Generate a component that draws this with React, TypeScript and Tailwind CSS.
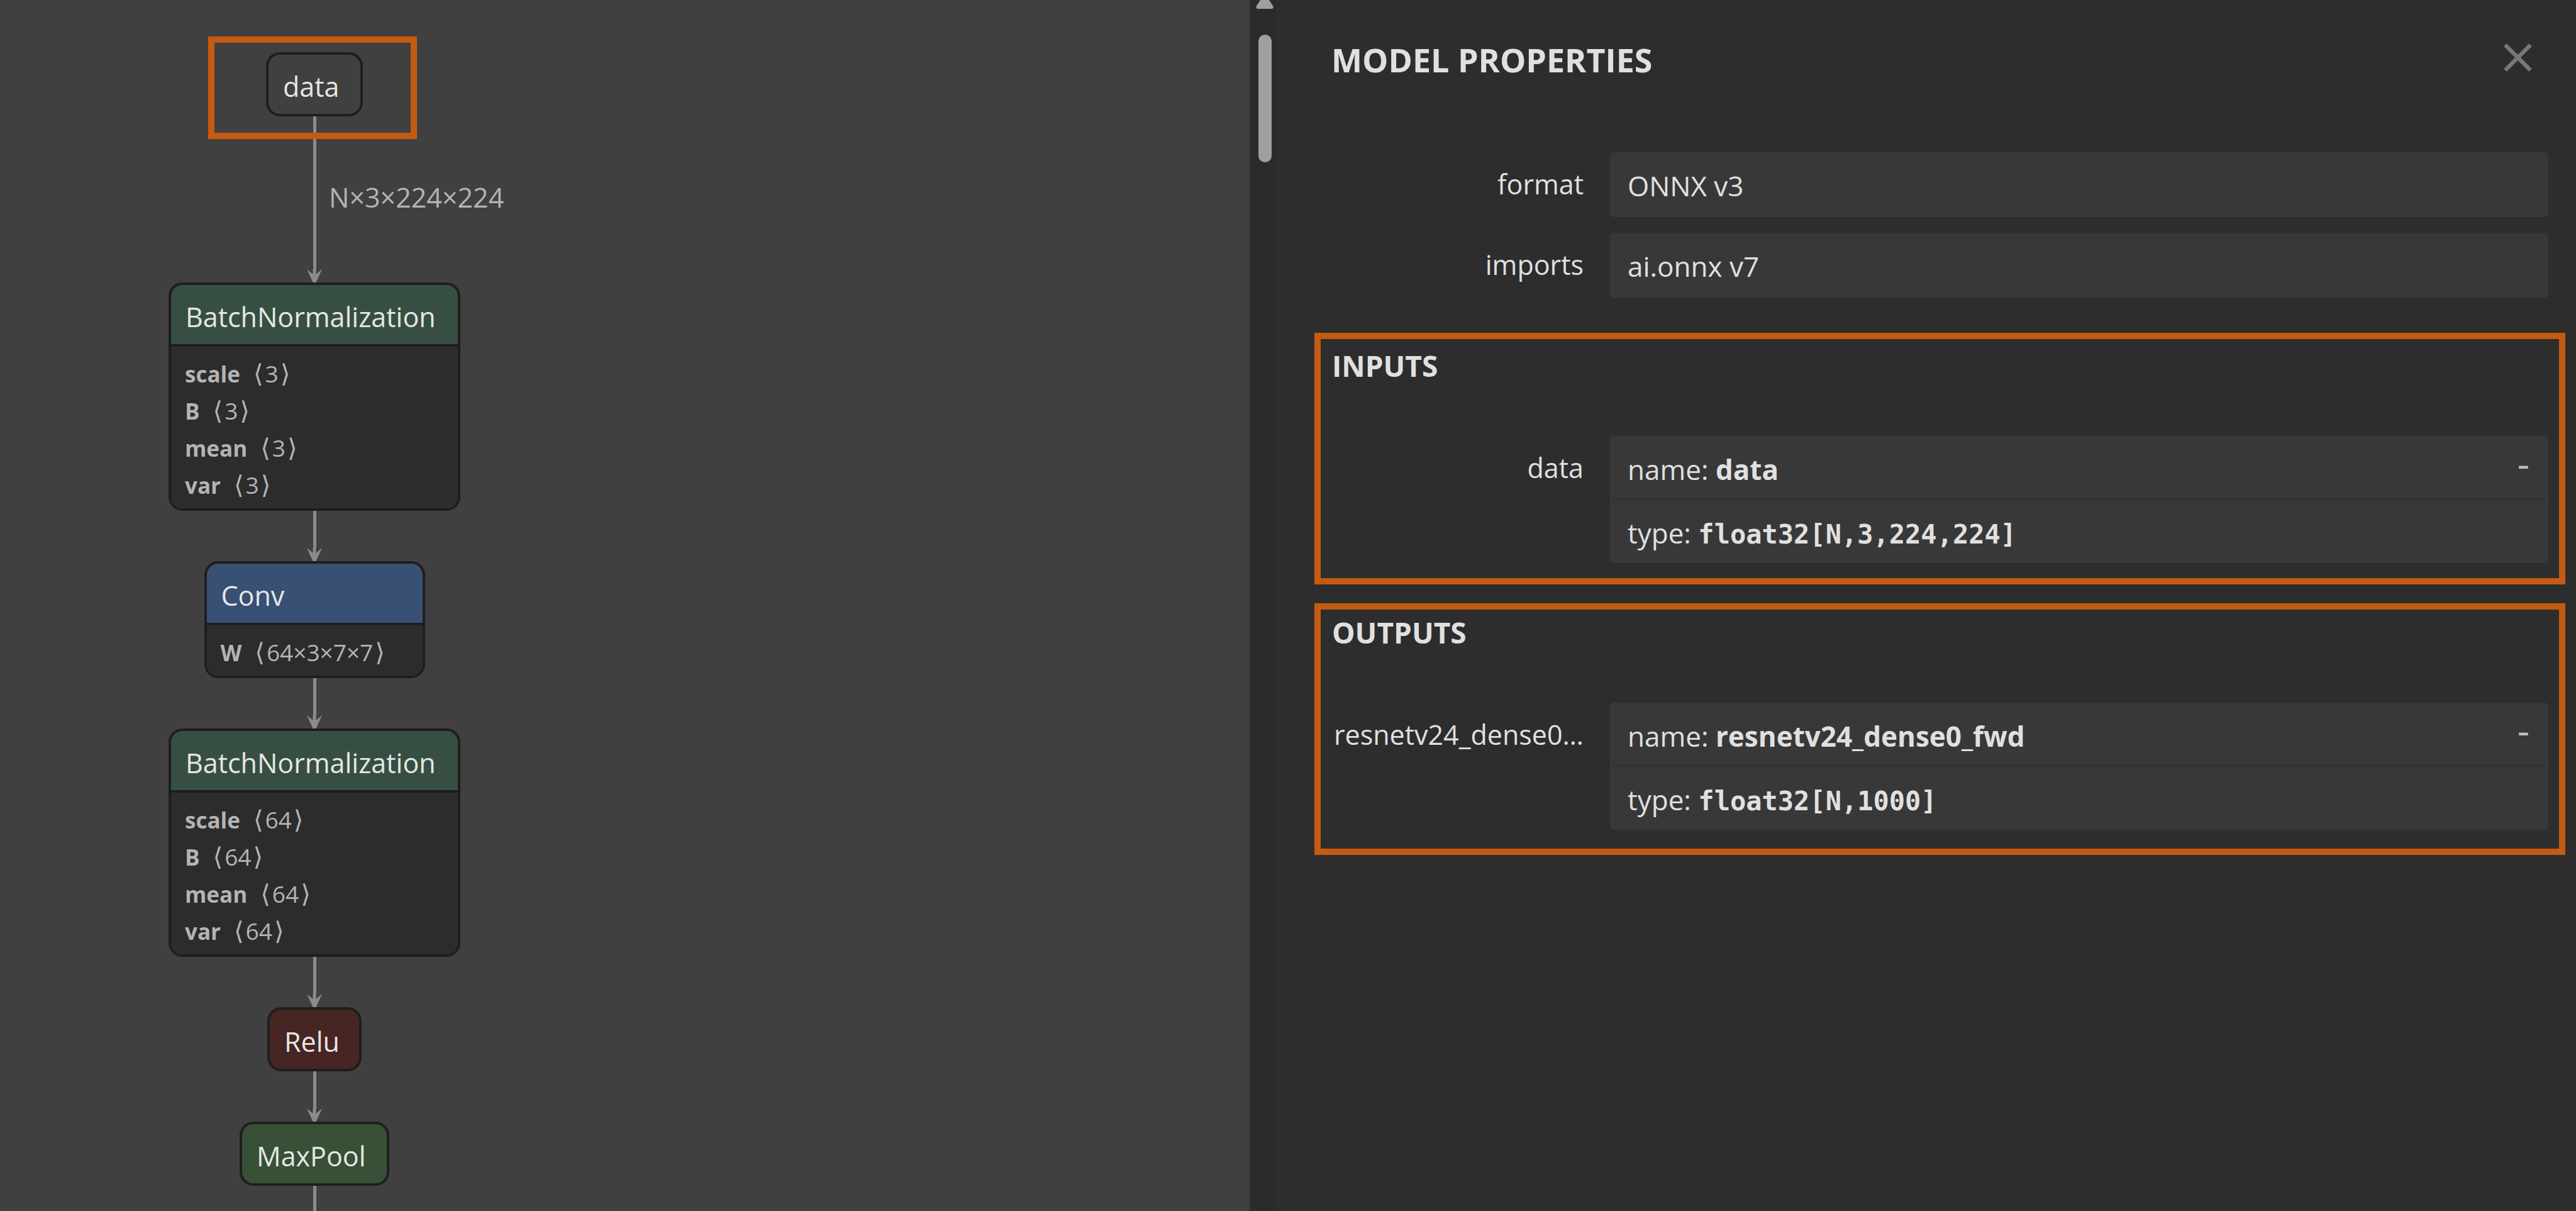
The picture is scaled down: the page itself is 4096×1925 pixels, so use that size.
import type { ReactNode } from "react";

type Attr = { name: string; shape: string };

function Bracket({ children }: { children: string }) {
  return <span className="px-[3px] font-['DejaVu_Sans',sans-serif] text-[40px] leading-none">{children}</span>;
}

function GraphNode({
  title,
  width,
  fill,
  attrs = [],
}: {
  title: string;
  width: string;
  fill: string;
  attrs?: Attr[];
}) {
  return (
    <div className={`shrink-0 overflow-hidden rounded-[22px] border-4 border-[#1e1e1e] ${width} ${fill}`}>
      <div className="pt-2 pl-[23px] text-[43px] leading-[86px] whitespace-nowrap text-[#e6e6e6]">{title}</div>
      {attrs.length > 0 && (
        <ul className="border-t-4 border-[#1e1e1e] bg-[#2c2c2c] pt-[13px] pb-2 pl-[22px]">
          {attrs.map((a) => (
            <li key={a.name} className="flex h-[59px] items-baseline gap-[18px] text-[37px] leading-[59px] text-[#b4b4b4]">
              <b className="text-[35px]">{a.name}</b>
              <span>
                <Bracket>⟨</Bracket>
                {a.shape}
                <Bracket>⟩</Bracket>
              </span>
            </li>
          ))}
        </ul>
      )}
    </div>
  );
}

function Edge({ height, children }: { height: string; children?: ReactNode }) {
  return (
    <div className={`relative flex w-[26px] shrink-0 flex-col items-center ${height}`}>
      <div className="w-[5px] flex-1 bg-[#8b8b8b]" />
      <svg viewBox="0 0 26 21" className="h-[21px] w-[26px]" fill="#8b8b8b" aria-hidden="true">
        <path d="M1 0 L10.5 8 V0 H15.5 V8 L25 0 L15.5 21 H10.5 Z" />
      </svg>
      {children}
    </div>
  );
}

function Field({ label, children }: { label: string; children: ReactNode }) {
  return (
    <div className="flex items-start gap-[42px]">
      <dt className="w-[400px] shrink-0 text-right leading-[101px] whitespace-nowrap">{label}</dt>
      <dd className="min-w-0 flex-1 rounded-md bg-[#383838] text-[44px]">{children}</dd>
    </div>
  );
}

function Argument({ label, name, type }: { label: string; name: string; type: string }) {
  return (
    <dl>
      <Field label={label}>
        <div className="flex h-[99px] items-start justify-between pt-2 pr-[30px] pl-7 leading-[91px]">
          <span>
            name: <b>{name}</b>
          </span>
          <button type="button" aria-label="Collapse" className="text-[60px] leading-[70px] text-[#c0c0c0]">
            -
          </button>
        </div>
        <div className="mx-1 h-[3px] bg-[#333333]" />
        <div className="h-[100px] pl-7 leading-[104px]">
          type: <b className="font-['DejaVu_Sans_Mono',monospace] text-[42px]">{type}</b>
        </div>
      </Field>
    </dl>
  );
}

function Section({ title, padding, children }: { title: string; padding: string; children: ReactNode }) {
  return (
    <section className={`mr-[17px] ml-[60px] border-10 border-[#c55a11] pr-[17px] pl-[18px] ${padding}`}>
      <h2 className="mb-[82px] text-[46px] leading-[60px] font-bold">{title}</h2>
      {children}
    </section>
  );
}

const params = (shape: string): Attr[] => ["scale", "B", "mean", "var"].map((name) => ({ name, shape }));

export default function App() {
  return (
    <div className="grid h-screen grid-cols-[1987fr_2109fr] overflow-hidden bg-[#404040] font-['Open_Sans',sans-serif]">
      <main className="overflow-hidden">
        <div className="ml-[268px] flex h-full w-[464px] flex-col items-center pt-[83px]">
          <div className="relative z-10">
            <GraphNode title="data" width="w-[154px]" fill="bg-[#404040]" />
            <div className="pointer-events-none absolute -top-[25px] -right-[86px] -bottom-[36px] -left-[92px] border-10 border-[#c55a11]" />
          </div>
          <Edge height="h-[264px]">
            <span className="absolute top-[99px] left-full ml-2.5 text-[43px] leading-[60px] whitespace-nowrap text-[#b4b4b4]">
              N×3×224×224
            </span>
          </Edge>
          <GraphNode title="BatchNormalization" width="w-[464px]" fill="bg-[#374f42]" attrs={params("3")} />
          <Edge height="h-20" />
          <GraphNode
            title="Conv"
            width="w-[351px]"
            fill="bg-[#375073]"
            attrs={[{ name: "W", shape: "64×3×7×7" }]}
          />
          <Edge height="h-20" />
          <GraphNode title="BatchNormalization" width="w-[464px]" fill="bg-[#374f42]" attrs={params("64")} />
          <Edge height="h-20" />
          <GraphNode title="Relu" width="w-[150px]" fill="bg-[#472522]" />
          <Edge height="h-20" />
          <GraphNode title="MaxPool" width="w-[238px]" fill="bg-[#385036]" />
          <Edge height="h-20" />
        </div>
      </main>

      <aside className="flex min-w-0 bg-[#2d2d2d] text-[43px] text-[#e0e0e0]">
        <div className="flex w-[43px] shrink-0 flex-col items-center bg-[#2b2b2b] pr-[5px] pl-2.5">
          <svg viewBox="0 0 28 14" className="h-3.5 w-7" fill="#a0a0a0" aria-hidden="true">
            <path d="M7 0 H21 L27.5 10 Q28 14 25 14 H3 Q0 14 0.5 10 Z" />
          </svg>
          <div className="mt-[41px] h-[203px] w-[21px] rounded-full bg-[#9f9f9f]" />
        </div>

        <div className="min-w-0 flex-1">
          <header className="flex h-[242px] items-start justify-between pr-[70px] pl-[87px]">
            <h1 className="pt-[60px] text-[52px] leading-[70px] font-bold">MODEL PROPERTIES</h1>
            <button type="button" aria-label="Close" className="mt-[69px]">
              <svg viewBox="0 0 45 45" className="size-[45px]" stroke="#777777" strokeWidth="6.5" aria-hidden="true">
                <path d="M2.5 2.5 L42.5 42.5 M42.5 2.5 L2.5 42.5" />
              </svg>
            </button>
          </header>

          <dl className="mb-14 flex flex-col gap-[25px] pr-11 pl-[88px]">
            <Field label="format">
              <div className="pt-1 pl-7 leading-[99px]">ONNX v3</div>
            </Field>
            <Field label="imports">
              <div className="pt-1 pl-7 leading-[99px]">ai.onnx v7</div>
            </Field>
          </dl>

          <div className="flex flex-col gap-[30px]">
            <Section title="INPUTS" padding="pt-3 pb-6">
              <Argument label="data" name="data" type="float32[N,3,224,224]" />
            </Section>
            <Section title="OUTPUTS" padding="pt-1.5 pb-[30px]">
              <Argument label="resnetv24_dense0…" name="resnetv24_dense0_fwd" type="float32[N,1000]" />
            </Section>
          </div>
        </div>
      </aside>
    </div>
  );
}
